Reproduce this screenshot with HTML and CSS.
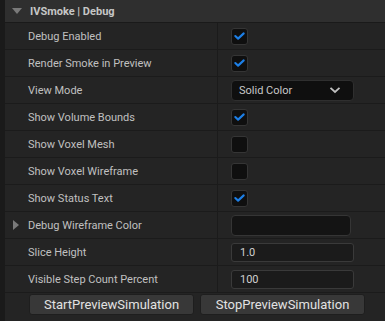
FILE: index.html
```html
<!DOCTYPE html>
<html lang="en">

<head>
    <meta charset="UTF-8">
    <meta name="viewport" content="width=device-width, initial-scale=1.0">
    <title>IVSmoke | Debug</title>
    <link rel="stylesheet" href="styles.css">
</head>

<body>
    <div class="panel">
        <div class="header">
            <span class="arrow-down"></span>
            <span class="header-title">IVSmoke | Debug</span>
        </div>

        <div class="row">
            <div class="name">Debug Enabled</div>
            <div class="value"><span class="check on"><svg viewBox="0 0 16 16"><polyline points="3.5,8 6.5,10.8 12.5,5.2"/></svg></span></div>
        </div>
        <div class="row">
            <div class="name">Render Smoke in Preview</div>
            <div class="value"><span class="check on"><svg viewBox="0 0 16 16"><polyline points="3.5,8 6.5,10.8 12.5,5.2"/></svg></span></div>
        </div>
        <div class="row">
            <div class="name">View Mode</div>
            <div class="value">
                <div class="combo">
                    <span>Solid Color</span>
                    <svg class="chevron" viewBox="0 0 12 8"><polyline points="1.5,1.8 6,6 10.5,1.8"/></svg>
                </div>
            </div>
        </div>
        <div class="row">
            <div class="name">Show Volume Bounds</div>
            <div class="value"><span class="check on"><svg viewBox="0 0 16 16"><polyline points="3.5,8 6.5,10.8 12.5,5.2"/></svg></span></div>
        </div>
        <div class="row">
            <div class="name">Show Voxel Mesh</div>
            <div class="value"><span class="check"></span></div>
        </div>
        <div class="row">
            <div class="name">Show Voxel Wireframe</div>
            <div class="value"><span class="check"></span></div>
        </div>
        <div class="row">
            <div class="name">Show Status Text</div>
            <div class="value"><span class="check on"><svg viewBox="0 0 16 16"><polyline points="3.5,8 6.5,10.8 12.5,5.2"/></svg></span></div>
        </div>
        <div class="row">
            <div class="name"><span class="arrow-right"></span>Debug Wireframe Color</div>
            <div class="value"><div class="swatch"></div></div>
        </div>
        <div class="row">
            <div class="name">Slice Height</div>
            <div class="value"><div class="numbox">1.0</div></div>
        </div>
        <div class="row">
            <div class="name">Visible Step Count Percent</div>
            <div class="value"><div class="numbox">100</div></div>
        </div>

        <div class="buttons">
            <button class="btn">StartPreviewSimulation</button>
            <button class="btn">StopPreviewSimulation</button>
        </div>
    </div>
</body>

</html>
```

FILE: styles.css
```css
body {
    margin: 0;
    background-color: #1a1a1a;
    font-family: Roboto, "Liberation Sans", sans-serif;
    font-size: 11px;
    color: #c0c0c0;
    height: 321px;
    overflow: hidden;
}

.panel {
    margin-left: 5px;
    background-color: #242424;
    height: 100%;
}

.header {
    display: flex;
    align-items: center;
    height: 22px;
    background-color: #2f2f2f;
    border-bottom: 1px solid #1a1a1a;
}

.arrow-down {
    width: 0;
    height: 0;
    margin-left: 7px;
    margin-right: 8px;
    border-left: 5px solid transparent;
    border-right: 5px solid transparent;
    border-top: 6px solid #7a7a7a;
}

.header-title {
    font-weight: bold;
    color: #c6c6c6;
}

.row {
    display: flex;
    height: 26px;
    border-bottom: 1px solid #1b1b1b;
}

.name {
    position: relative;
    width: 213px;
    padding-left: 23px;
    box-sizing: border-box;
    display: flex;
    align-items: center;
    border-right: 1px solid #1b1b1b;
}

.arrow-right {
    position: absolute;
    left: 8px;
    top: 8px;
    width: 0;
    height: 0;
    border-top: 5px solid transparent;
    border-bottom: 5px solid transparent;
    border-left: 6px solid #7a7a7a;
}

.value {
    flex: 1;
    display: flex;
    align-items: center;
    padding-left: 13px;
}

.check {
    width: 15px;
    height: 15px;
    background-color: #0f0f0f;
    border: 1px solid #353535;
    border-radius: 3px;
    display: flex;
    align-items: center;
    justify-content: center;
}

.check svg {
    width: 16px;
    height: 16px;
    fill: none;
    stroke: #1d7fe6;
    stroke-width: 2.2;
    stroke-linecap: round;
    stroke-linejoin: round;
}

.combo {
    width: 102px;
    height: 19px;
    background-color: #0f0f0f;
    border: 1px solid #2f2f2f;
    border-radius: 4px;
    display: flex;
    align-items: center;
    justify-content: space-between;
    padding: 0 12px 0 7px;
    color: #c8c8c8;
}

.chevron {
    width: 12px;
    height: 8px;
    fill: none;
    stroke: #c0c0c0;
    stroke-width: 1.8;
}

.swatch {
    width: 118px;
    height: 19px;
    background-color: #141414;
    border: 1px solid #353535;
    border-radius: 4px;
}

.numbox {
    width: 113px;
    height: 17px;
    line-height: 17px;
    background-color: #1b1b1b;
    border: 1px solid #3a3a3a;
    border-radius: 3px;
    padding-left: 8px;
    color: #d0d0d0;
}

.buttons {
    display: flex;
    gap: 6px;
    padding: 1px 0 0 24px;
}

.btn {
    width: 165px;
    height: 21px;
    padding: 0;
    background-color: #383838;
    border: 1px solid #1e1e1e;
    border-radius: 3px;
    color: #e2e2e2;
    font-family: Roboto, "Liberation Sans", sans-serif;
    font-size: 13px;
}
```
